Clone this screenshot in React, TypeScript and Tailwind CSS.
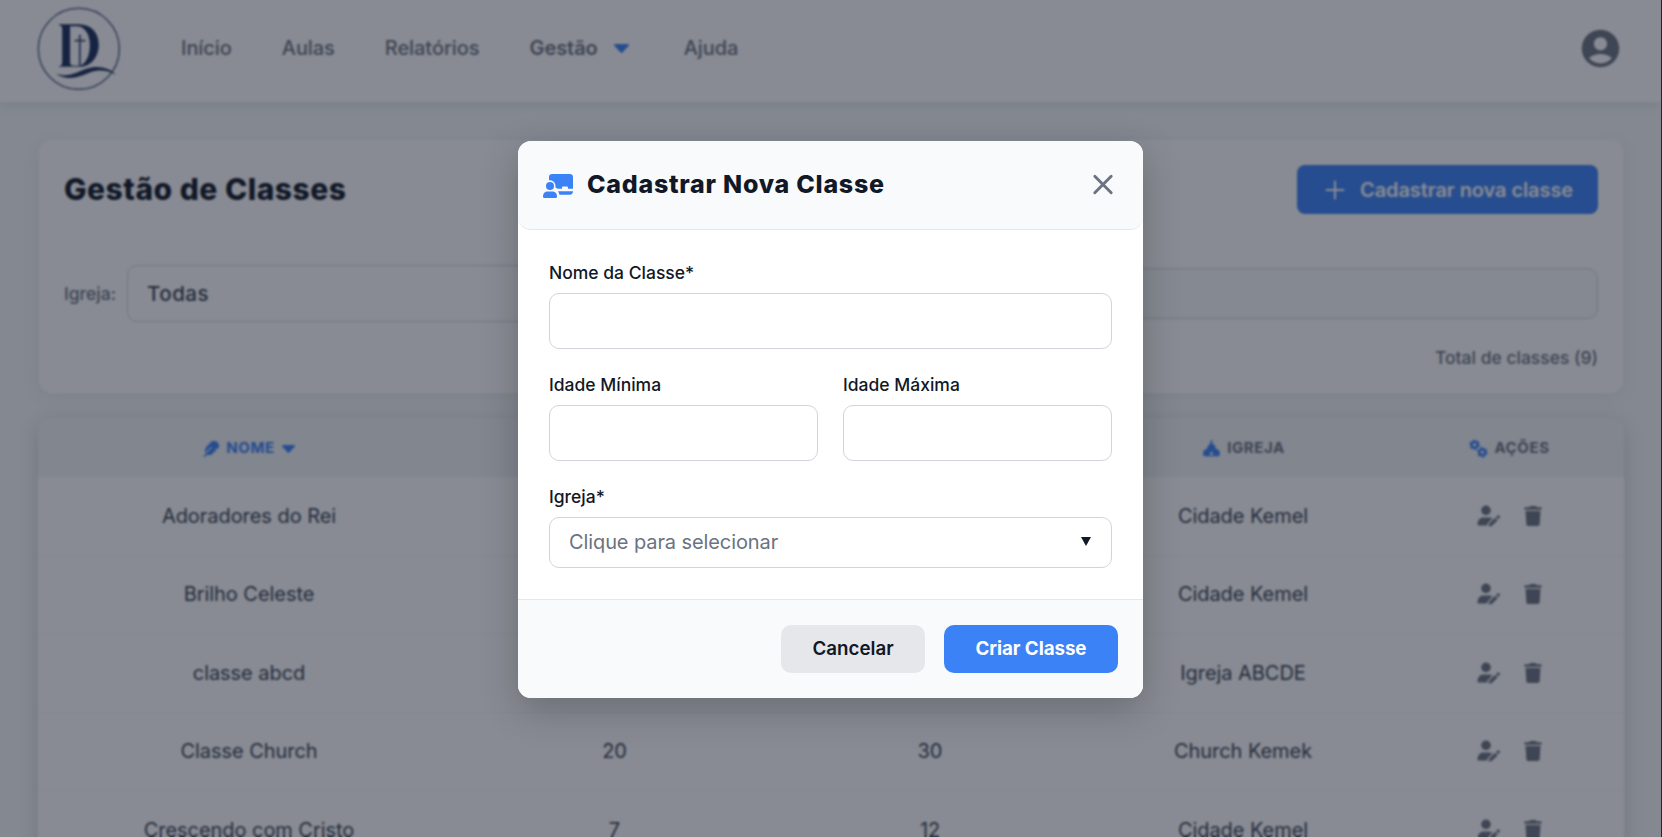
import React from "react";
import { FaFeather, FaTrash } from "react-icons/fa6";
import { MdAccountCircle } from "react-icons/md";

const classes = [
  { nome: "Adoradores do Rei", min: "18", max: "35", igreja: "Cidade Kemel" },
  { nome: "Brilho Celeste", min: "4", max: "6", igreja: "Cidade Kemel" },
  { nome: "classe abcd", min: "10", max: "15", igreja: "Igreja ABCDE" },
  { nome: "Classe Church", min: "20", max: "30", igreja: "Church Kemek" },
  { nome: "Crescendo com Cristo", min: "7", max: "12", igreja: "Cidade Kemel" },
];

const columns = "grid grid-cols-[422px_309px_322px_304px_228px]";

function Logo() {
  return (
    <svg className="h-[83px] w-[83px] shrink-0" viewBox="0 0 84 84" fill="none">
      <circle cx="42.300" cy="42.300" r="41" stroke="#56658a" strokeWidth="1.5" />
      <path
        fillRule="evenodd"
        d="M21.500 17.500H42C55 17.500 62.500 26 62.500 38.500C62.500 51 54 60.500 44 60.500H21.500C24 59.500 25.500 59 25.500 56V22C25.500 19.500 24 19 21.500 17.500ZM33.500 19.500V56C33.500 58.500 35 59.500 37 59.500H43C49 58 53.500 50 53.500 38.500C53.500 27 48 19.500 40 19.500Z"
        fill="#1b2f5c"
      />
      <path d="M43.300 28V59.500M38 34H49" stroke="#33456c" strokeWidth="1.800" />
      <path
        d="M19 67.500C33 72 42 65 50 62.500C61 58.500 73 61 80 68.500C71 63.500 62 63 54 66C44 70 32 76 19 67.500Z"
        fill="#1b2f5c"
      />
    </svg>
  );
}

function Caret({ className }: { className: string }) {
  return (
    <svg className={className} viewBox="0 0 15 9" fill="currentColor">
      <path d="M1.200 0H13.800C14.900 0 15.300 1.200 14.500 2L8.400 8.500C7.900 9.100 7.100 9.100 6.600 8.500L0.500 2C-0.300 1.200 0.100 0 1.200 0Z" />
    </svg>
  );
}

function BoardUserIcon() {
  return (
    <svg className="h-[24px] w-[30px]" viewBox="0 0 30 24" fill="#3b82f6">
      <path d="M9 0H27C28.700 0 30 1.300 30 3V14.800H25V13.800C25 13 24.400 12.600 23.700 12.600H20.300C19.500 12.600 19 13 19 13.800V14.800H14.500C14 14 13.200 13.600 12.400 13.400C13.100 10 11 6.300 7 6.200C6.600 6.200 6.300 6.200 6 6.300V3C6 1.300 7.300 0 9 0Z" />
      <path d="M15 17.300H30C30 19.300 28.700 20.700 27 20.700H16.400C16.200 19.500 15.800 18.300 15 17.300Z" />
      <circle cx="7" cy="12" r="4" />
      <path d="M4.500 17.500H9.500C12 17.500 14 19.500 14 22V22.800C14 23.500 13.500 24 12.800 24H1.200C0.500 24 0 23.500 0 22.800V22C0 19.500 2 17.500 4.500 17.500Z" />
    </svg>
  );
}

function ChurchIcon() {
  return (
    <svg className="h-[17px] w-[17px] text-[#3b82f6]" viewBox="0 0 17 17" fill="currentColor">
      <path
        fillRule="evenodd"
        d="M7.700 0H9.300V3L12.500 6.500V8.200L15.700 10.200C16.500 10.800 16.800 11.500 16.800 12.300V14.500C16.800 15.700 16 16.300 15 16.300H2C1 16.300 0.200 15.700 0.200 14.500V12.300C0.200 11.500 0.500 10.800 1.300 10.200L4.500 8.200V6.500L7.700 3ZM7.200 15H9.800V13.300C9.800 11.500 7.200 11.500 7.200 13.300Z"
      />
    </svg>
  );
}

function GearsIcon() {
  return (
    <svg className="h-[18px] w-[19px] text-[#3b82f6]" viewBox="0 0 19 18" fill="none" stroke="currentColor">
      <circle cx="5.600" cy="4.800" r="3" strokeWidth="2.600" />
      <circle cx="5.600" cy="4.800" r="4.500" strokeWidth="1.400" strokeDasharray="2.400 2.310" />
      <circle cx="13.300" cy="12.300" r="3" strokeWidth="2.600" />
      <circle cx="13.300" cy="12.300" r="4.500" strokeWidth="1.400" strokeDasharray="2.400 2.310" />
    </svg>
  );
}

function UserPenIcon() {
  return (
    <svg className="h-[22px] w-[23px]" viewBox="0 0 23 22" fill="currentColor">
      <circle cx="9" cy="5.300" r="4.800" />
      <path d="M6 12.500H12C13.300 12.500 14.500 12.900 15.400 13.600L11 18C10.500 18.500 10.300 19.500 10.100 20.500H1.500C0.900 20.500 0.500 20 0.500 19.400C0.700 15.500 2.800 12.700 6 12.500Z" />
      <path d="M11.600 21.500L12.300 18.500L18.200 12.700L20.700 15.200L14.800 21ZM19 11.900L20.200 10.700C20.900 10 21.900 10 22.500 10.700C23.100 11.300 23.100 12.400 22.500 13L21.400 14.300Z" />
    </svg>
  );
}

function Header() {
  return (
    <header className="flex h-[102px] items-center bg-white pr-[42px] pb-[5px] pl-[37px] shadow-[0_2px_12px_rgba(0,0,0,0.1)]">
      <Logo />
      <nav className="ml-[61px] flex flex-1 items-center gap-[50px] pb-px text-[20px] font-medium tracking-[-0.070px] text-[#6b7280]">
        <span>Início</span>
        <span>Aulas</span>
        <span>Relatórios</span>
        <span className="flex items-center gap-[16px] font-semibold">
          Gestão
          <Caret className="mr-[5px] h-[9px] w-[15px] text-[#3b82f6]" />
        </span>
        <span>Ajuda</span>
      </nav>
      <MdAccountCircle className="-mr-[4px] h-[45px] w-[45px] text-[#6b7280]" />
    </header>
  );
}

function Toolbar() {
  return (
    <section className="h-[253px] rounded-[13px] bg-white pr-[25px] pl-[25px] pt-[25px] shadow-[0_4px_20px_rgba(0,0,0,0.06)]">
      <div className="flex h-[75px] items-start justify-between border-b border-[#f9fafb]">
        <h1 className="mt-[4px] text-[30px] leading-[40px] font-extrabold tracking-[0.500px] text-[#111827]">Gestão de Classes</h1>
        <button className="flex h-[49px] w-[301px] items-center gap-[15px] rounded-lg bg-[#3b82f6] pl-7 text-[20px] font-semibold tracking-[-0.080px] whitespace-nowrap text-white">
          <svg className="h-[20px] w-[20px]" viewBox="0 0 20 20" stroke="currentColor" strokeWidth="2" strokeLinecap="round">
            <path d="M10 1.500V18.500M1.500 10H18.500" />
          </svg>
          Cadastrar nova classe
        </button>
      </div>
      <div className="mt-[25px] flex items-center">
        <span className="mt-[2px] w-[63px] text-[17.5px] font-medium text-[#6b7280]">Igreja:</span>
        <div className="flex h-[57px] w-[680px] items-center rounded-[10px] border border-[#d1d5db] px-[19px] pt-[2px] text-[20.5px] font-medium tracking-[0.500px] text-[#374151]">
          Todas
        </div>
        <div className="ml-8 h-[51px] flex-1 rounded-[10px] border border-[#d1d5db] bg-[#f8fafa]" />
      </div>
      <p className="mt-[23px] text-right text-[17.5px] leading-[26px] font-medium text-[#6b7280]">Total de classes (9)</p>
    </section>
  );
}

function ClassTable() {
  return (
    <section className="mt-[25px] -ml-px w-[1586px] overflow-hidden rounded-[13px] bg-white shadow-[0_4px_20px_rgba(0,0,0,0.15)]">
      <div className={columns + " h-[59px] items-center bg-[#f1f4f6] pt-[2px] text-[15px] font-bold tracking-[0.600px] text-[#6b7280]"}>
        <div className="flex items-center justify-center gap-[7px] text-[#3b82f6]">
          <FaFeather className="h-[16px] w-[16px]" />
          NOME
          <Caret className="h-[8px] w-[13px]" />
        </div>
        <div className="text-center">IDADE MÍNIMA</div>
        <div className="text-center">IDADE MÁXIMA</div>
        <div className="flex items-center justify-center gap-[7px] pl-[2px]">
          <ChurchIcon />
          IGREJA
        </div>
        <div className="flex items-center justify-center gap-[6px] pl-px">
          <GearsIcon />
          AÇÕES
        </div>
      </div>
      {classes.map((item) => (
        <div
          key={item.nome}
          className={columns + " h-[78.5px] items-center border-b border-[#f3f4f6] text-center text-[20px] tracking-[-0.050px] text-[#374151]"}
        >
          <span>{item.nome}</span>
          <span>{item.min}</span>
          <span>{item.max}</span>
          <span>{item.igreja}</span>
          <span className="flex items-center justify-center gap-[24px] text-[#6b7280]">
            <UserPenIcon />
            <FaTrash className="h-[20px] w-[18px]" />
          </span>
        </div>
      ))}
    </section>
  );
}

function Field({ label }: { label: string }) {
  return (
    <label className="block flex-1">
      <span className="block text-[17.5px] leading-[26px] font-medium text-[#111827]">{label}</span>
      <input className="mt-[7px] block h-[56px] w-full rounded-[10px] border border-[#d1d5db] bg-white" />
    </label>
  );
}

function Modal() {
  return (
    <div className="flex h-[557px] w-[625px] flex-col overflow-hidden rounded-[13px] bg-white">
      <div className="flex h-[89px] shrink-0 items-center rounded-[13px] border-b border-[#e5e7eb] bg-[#f9fafb] pr-[26px] pl-[25px]">
        <div className="mt-[2px]">
          <BoardUserIcon />
        </div>
        <h2 className="ml-[14px] flex-1 text-[25px] font-extrabold tracking-[0.750px] whitespace-nowrap text-[#111827]">Cadastrar Nova Classe</h2>
        <button aria-label="Fechar">
          <svg className="h-[28px] w-[28px]" viewBox="0 0 28 28" stroke="#6b7280" strokeWidth="2.900" strokeLinecap="round">
            <path d="M5.800 5.300L22.200 21.700M22.200 5.300L5.800 21.700" />
          </svg>
        </button>
      </div>
      <div className="flex-1 px-[31px] pt-[30px]">
        <Field label="Nome da Classe*" />
        <div className="mt-[23px] flex gap-[25px]">
          <Field label="Idade Mínima" />
          <Field label="Idade Máxima" />
        </div>
        <div className="mt-[23px] text-[17.5px] leading-[26px] font-medium text-[#111827]">Igreja*</div>
        <div className="mt-[7px] flex h-[51px] items-center justify-between rounded-[10px] border border-[#d1d5db] px-[19px] pb-[2px] text-[20px] tracking-[-0.100px] text-[#6b7280]">
          Clique para selecionar
          <svg className="mr-[1px] h-[9px] w-[10px]" viewBox="0 0 10 9" fill="#111827">
            <path d="M0 0H10L5 9Z" />
          </svg>
        </div>
      </div>
      <div className="flex h-[99px] shrink-0 items-center justify-end gap-[19px] border-t border-[#e5e7eb] bg-[#f9fafb] px-[25px] text-[18.75px] whitespace-nowrap">
        <button className="h-[48px] w-[144px] rounded-[10px] bg-[#e5e7eb] font-semibold text-[#111827]">Cancelar</button>
        <button className="h-[48px] w-[174px] rounded-[10px] bg-[#3b82f6] font-bold tracking-[-0.060px] text-white">Criar Classe</button>
      </div>
    </div>
  );
}

export default function App() {
  return (
    <div className="relative h-[837px] overflow-hidden border-r border-[#22252b] bg-[#f6f9fa] font-['Inter',sans-serif]">
      <Header />
      <main className="px-[38px] pt-[38px]">
        <div className="pl-px">
          <Toolbar />
          <ClassTable />
        </div>
      </main>
      <div className="absolute inset-0 flex items-start justify-center bg-[#111827]/50 pt-[141px] backdrop-blur-[1px]">
        <div className="rounded-[13px] shadow-[0_12px_38px_rgba(0,0,0,0.22)]">
          <Modal />
        </div>
      </div>
    </div>
  );
}
